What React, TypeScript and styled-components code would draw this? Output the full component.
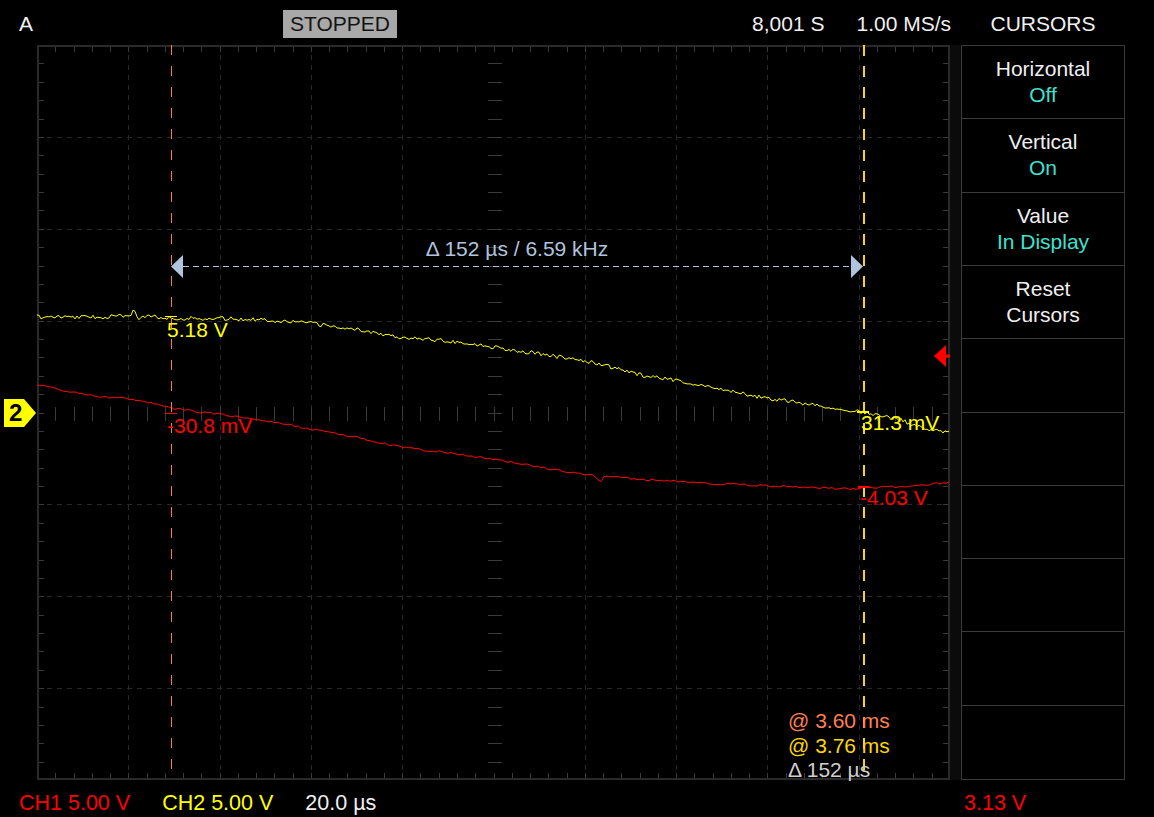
import React from "react";
import styled, { createGlobalStyle } from "styled-components";

const GlobalStyle = createGlobalStyle`
  html, body {
    margin: 0;
    padding: 0;
    background: #000;
  }
  body {
    font-family: "Liberation Sans", Arial, sans-serif;
  }
`;

const W = 913;
const H = 735;
const DX = W / 10;
const DY = H / 8;
const OX = 37;
const OY = 45;

const C = {
  white: "#f0f0f0",
  teal: "#40e0d0",
  red: "#ff0000",
  yellow: "#ffff00",
  coral: "#ff7f50",
  cursor1: "#ff784a",
  gold: "#ffd700",
  steel: "#b0c4de",
  grid: "#282828",
  tick: "#3a3a3a",
  border: "#2a2a2a",
  panelLine: "#3a3a3a",
};

function rng(seed: number) {
  let a = seed;
  return () => {
    a |= 0;
    a = (a + 0x6d2b79f5) | 0;
    let t = Math.imul(a ^ (a >>> 15), 1 | a);
    t = (t + Math.imul(t ^ (t >>> 7), 61 | t)) ^ t;
    return ((t ^ (t >>> 14)) >>> 0) / 4294967296;
  };
}

type Pt = [number, number];

function buildTrace(keys: Pt[], seed: number, amp: number, step: number) {
  const r = rng(seed);
  const pts: string[] = [];
  let k = 0;
  const end = keys[keys.length - 1][0];
  for (let x = keys[0][0]; x <= end; x += step) {
    while (k < keys.length - 2 && x > keys[k + 1][0]) k++;
    const [x0, y0] = keys[k];
    const [x1, y1] = keys[k + 1];
    const t = (x - x0) / (x1 - x0);
    const y = y0 + (y1 - y0) * t + (r() - 0.5) * 2 * amp;
    pts.push(`${(x - OX).toFixed(1)},${(y - OY).toFixed(1)}`);
  }
  return pts.join(" ");
}

const yellowKeys: Pt[] = [
  [37, 317], [100, 317], [130, 316], [134, 307], [138, 321], [145, 316],
  [170, 318], [250, 319], [300, 322], [330, 326], [360, 330], [400, 337],
  [450, 341], [500, 348], [560, 357], [600, 364], [640, 375], [680, 381],
  [720, 389], [760, 397], [800, 403], [840, 409], [863, 412], [900, 420],
  [930, 430], [950, 433],
];

const redKeys: Pt[] = [
  [37, 385], [60, 390], [100, 397], [130, 399], [150, 403], [170, 408],
  [200, 412], [250, 418], [300, 427], [350, 436], [400, 447], [450, 453],
  [500, 460], [550, 469], [595, 476], [600, 482], [605, 476], [650, 480],
  [700, 483], [750, 485], [800, 487], [850, 489], [880, 487], [920, 486],
  [950, 482],
];

const yellowTrace = buildTrace(yellowKeys, 7, 2, 2);
const redTrace = buildTrace(redKeys, 13, 1, 3);

/* ---------- layout ---------- */

const Frame = styled.div`
  width: 1154px;
  height: 817px;
  display: grid;
  grid-template-rows: 45px 735px 37px;
  background: #000;
  color: ${C.white};
  font-size: 21px;
  overflow: hidden;
`;

const Header = styled.header`
  display: flex;
  align-items: flex-start;
  box-sizing: border-box;
  padding: 10px 0 0 19px;
`;

const ModeLabel = styled.div`
  width: 264px;
  line-height: 24px;
  padding-top: 2px;
`;

const StatusBadge = styled.div`
  background: #a8a8a8;
  color: #141414;
  padding: 2px 7px;
  line-height: 24px;
`;

const Spacer = styled.div`
  flex: 1;
`;

const Stat = styled.div<{ $gap: number }>`
  line-height: 24px;
  padding-top: 2px;
  margin-right: ${(p) => p.$gap}px;
`;

const MenuTitle = styled.div`
  width: 164px;
  margin-right: 29px;
  text-align: center;
  line-height: 24px;
  padding-top: 2px;
`;

const Body = styled.main`
  display: grid;
  grid-template-columns: 37px 913px 11px 164px 29px;
`;

const Gutter = styled.div`
  display: flex;
  align-items: center;
  padding-left: 4px;
`;

const ChannelMarker = styled.div`
  width: 32px;
  height: 28px;
  margin-top: 1px;
  background: ${C.yellow};
  clip-path: polygon(0 0, 20px 0, 32px 50%, 20px 100%, 0 100%);
  color: #000;
  font-weight: bold;
  font-size: 24px;
  line-height: 28px;
  box-sizing: border-box;
  padding-left: 5px;
`;

const Screen = styled.div`
  position: relative;
  width: 913px;
  height: 735px;
`;

const ScreenSvg = styled.svg`
  display: block;
  position: absolute;
  inset: 0;
`;

const Divider = styled.div`
  background: #0b0b0b;
`;

const Panel = styled.aside`
  display: grid;
  grid-template-rows: repeat(10, 1fr);
  border: 1px solid ${C.panelLine};
  box-sizing: border-box;
`;

const PanelCell = styled.div`
  display: flex;
  flex-direction: column;
  align-items: center;
  padding-top: 10px;
  border-bottom: 1px solid ${C.panelLine};
  line-height: 26px;
  &:last-child {
    border-bottom: none;
  }
`;

const CellValue = styled.span<{ $accent?: boolean }>`
  color: ${(p) => (p.$accent ? C.teal : C.white)};
`;

const Footer = styled.footer`
  display: grid;
  grid-template-columns: 961px 1fr;
  padding-top: 11px;
`;

const FooterLeft = styled.div`
  display: flex;
  gap: 32px;
  padding-left: 19px;
`;

const FooterRight = styled.div`
  padding-left: 3px;
`;

const ScaleLabel = styled.span<{ $color: string }>`
  color: ${(p) => p.$color};
  line-height: 24px;
  white-space: nowrap;
  font-size: 21.5px;
`;

const Readout = styled.span<{ $x: number; $y: number; $color: string; $center?: boolean }>`
  position: absolute;
  left: ${(p) => p.$x}px;
  top: ${(p) => p.$y}px;
  color: ${(p) => p.$color};
  line-height: 24px;
  white-space: nowrap;
  transform: ${(p) => (p.$center ? "translateX(-50%)" : "none")};
`;

const CursorInfo = styled.div`
  position: absolute;
  left: 751px;
  top: 664px;
  display: flex;
  flex-direction: column;
  line-height: 24.5px;
  white-space: nowrap;
`;

const InfoLine = styled.span<{ $color: string }>`
  color: ${(p) => p.$color};
`;

/* ---------- drawing ---------- */

function Graticule() {
  const els: React.ReactNode[] = [];
  for (let i = 1; i < 10; i++) {
    if (i === 5) continue;
    const x = Math.round(i * DX) + 0.5;
    els.push(
      <line key={`v${i}`} x1={x} y1={0} x2={x} y2={H} stroke={C.grid} strokeDasharray="5 5" />
    );
  }
  for (let j = 1; j < 8; j++) {
    if (j === 4) continue;
    const y = Math.round(j * DY) + 0.5;
    els.push(
      <line key={`h${j}`} x1={0} y1={y} x2={W} y2={y} stroke={C.grid} strokeDasharray="5 5" />
    );
  }
  const cy = Math.round(H / 2) + 0.5;
  const cx = Math.round(W / 2) + 0.5;
  for (let k = 1; k < 50; k++) {
    const x = Math.round((k * DX) / 5) + 0.5;
    els.push(<line key={`tt${k}`} x1={x} y1={0} x2={x} y2={7} stroke={C.tick} />);
    els.push(<line key={`tb${k}`} x1={x} y1={H - 7} x2={x} y2={H} stroke={C.tick} />);
    els.push(<line key={`tc${k}`} x1={x} y1={cy - 7} x2={x} y2={cy + 7} stroke={C.tick} />);
  }
  for (let k = 1; k < 40; k++) {
    const y = Math.round((k * DY) / 5) + 0.5;
    els.push(<line key={`tl${k}`} x1={0} y1={y} x2={7} y2={y} stroke={C.tick} />);
    els.push(<line key={`tr${k}`} x1={W - 7} y1={y} x2={W} y2={y} stroke={C.tick} />);
    els.push(<line key={`tm${k}`} x1={cx - 7} y1={y} x2={cx + 7} y2={y} stroke={C.tick} />);
  }
  return (
    <g shapeRendering="crispEdges">
      {els}
      <rect x={1} y={1} width={W - 2} height={H - 2} fill="none" stroke={C.border} strokeWidth={2} />
    </g>
  );
}

function Overlay() {
  const my = 221.5;
  return (
    <g>
      <polyline points={redTrace} fill="none" stroke={C.red} strokeWidth={1} />
      <polyline points={yellowTrace} fill="none" stroke={C.yellow} strokeWidth={1} />

      <line
        x1={134.5}
        y1={0}
        x2={134.5}
        y2={H}
        stroke={C.cursor1}
        strokeWidth={1}
        strokeDasharray="10 11"
        shapeRendering="crispEdges"
      />
      <line x1={827} y1={0} x2={827} y2={H} stroke={C.gold} strokeWidth={2} strokeDasharray="11 10" />

      <line x1={146} y1={my} x2={814} y2={my} stroke={C.steel} strokeDasharray="6 4" />
      <polygon points={`134,${my} 146,${my - 11.5} 146,${my + 11.5}`} fill={C.steel} />
      <polygon points={`826,${my} 814,${my - 11.5} 814,${my + 11.5}`} fill={C.steel} />

      <polygon
        points="897,311 909,300 909,309.5 913,309.5 913,312.5 909,312.5 909,322"
        fill={C.red}
      />

      <g shapeRendering="crispEdges">
        <rect x={128} y={270.5} width={12} height={1.5} fill={C.yellow} />
        <rect x={128} y={367.5} width={12} height={1.5} fill={C.red} />
        <rect x={820} y={366} width={12} height={1.5} fill={C.yellow} />
        <rect x={821} y={441} width={12} height={1.5} fill={C.red} />
      </g>
    </g>
  );
}

const panelItems: { title: string; value?: string; accent?: boolean }[] = [
  { title: "Horizontal", value: "Off", accent: true },
  { title: "Vertical", value: "On", accent: true },
  { title: "Value", value: "In Display", accent: true },
  { title: "Reset", value: "Cursors" },
  { title: "" },
  { title: "" },
  { title: "" },
  { title: "" },
  { title: "" },
  { title: "" },
];

export default function App() {
  return (
    <>
      <GlobalStyle />
      <Frame>
        <Header>
          <ModeLabel>A</ModeLabel>
          <StatusBadge>STOPPED</StatusBadge>
          <Spacer />
          <Stat $gap={32}>8,001 S</Stat>
          <Stat $gap={10}>1.00 MS/s</Stat>
          <MenuTitle>CURSORS</MenuTitle>
        </Header>

        <Body>
          <Gutter>
            <ChannelMarker>2</ChannelMarker>
          </Gutter>
          <Screen>
            <ScreenSvg width={W} height={H} viewBox={`0 0 ${W} ${H}`}>
              <Graticule />
              <Overlay />
            </ScreenSvg>
            <Readout $x={480} $y={192} $color={C.steel} $center>
              Δ 152 µs / 6.59 kHz
            </Readout>
            <Readout $x={130} $y={273} $color={C.yellow}>5.18 V</Readout>
            <Readout $x={130} $y={369} $color={C.red}>-30.8 mV</Readout>
            <Readout $x={824} $y={366} $color={C.yellow}>31.3 mV</Readout>
            <Readout $x={823} $y={441} $color={C.red}>-4.03 V</Readout>
            <CursorInfo>
              <InfoLine $color={C.coral}>@ 3.60 ms</InfoLine>
              <InfoLine $color={C.gold}>@ 3.76 ms</InfoLine>
              <InfoLine $color="#cfcfcf">Δ 152 µs</InfoLine>
            </CursorInfo>
          </Screen>
          <Divider />
          <Panel>
            {panelItems.map((item, i) => (
              <PanelCell key={i}>
                {item.title && <CellValue>{item.title}</CellValue>}
                {item.value && <CellValue $accent={item.accent}>{item.value}</CellValue>}
              </PanelCell>
            ))}
          </Panel>
          <div />
        </Body>

        <Footer>
          <FooterLeft>
            <ScaleLabel $color={C.red}>CH1 5.00 V</ScaleLabel>
            <ScaleLabel $color={C.yellow}>CH2 5.00 V</ScaleLabel>
            <ScaleLabel $color={C.white}>20.0 µs</ScaleLabel>
          </FooterLeft>
          <FooterRight>
            <ScaleLabel $color={C.red}>3.13 V</ScaleLabel>
          </FooterRight>
        </Footer>
      </Frame>
    </>
  );
}
